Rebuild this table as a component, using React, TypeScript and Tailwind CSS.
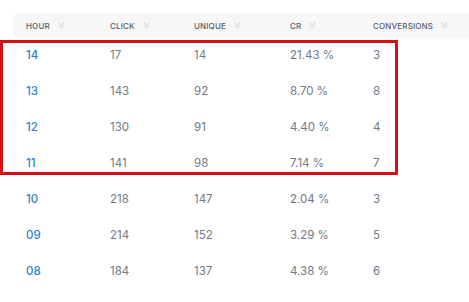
import React from "react";

const rows = [
  ["14", "17", "14", "21.43 %", "3"],
  ["13", "143", "92", "8.70 %", "8"],
  ["12", "130", "91", "4.40 %", "4"],
  ["11", "141", "98", "7.14 %", "7"],
  ["10", "218", "147", "2.04 %", "3"],
  ["09", "214", "152", "3.29 %", "5"],
  ["08", "184", "137", "4.38 %", "6"],
];

const headers = ["HOUR", "CLICK", "UNIQUE", "CR", "CONVERSIONS"];

function Chev() {
  return (
    <svg width="7" height="7" viewBox="0 0 7 7" fill="none" stroke="#c6cad1" strokeWidth="1" strokeLinecap="round" strokeLinejoin="round">
      <path d="M1 1 L3.5 3.2 L6 1" />
      <path d="M1 3.8 L3.5 6 L6 3.8" />
    </svg>
  );
}

export default function App() {
  return (
    <div className="relative w-[469px] h-[302px] bg-white overflow-hidden" style={{ fontFamily: "Inter, 'Noto Sans', sans-serif" }}>
      <div className="pt-[13px] pl-[13px]">
        <div className="grid grid-cols-[84px_84px_96px_83px_1fr] h-[25px] items-center bg-[#f7f7f8] rounded-l-[7px] pl-[13px]">
          {headers.map((h) => (
            <div key={h} className="flex items-center gap-[8px] text-[8px] font-medium text-[#545d6d] tracking-[0.15px]">
              <span>{h}</span>
              <Chev />
            </div>
          ))}
        </div>
        {rows.map((r) => (
          <div key={r[0]} className="grid grid-cols-[84px_84px_96px_83px_1fr] h-[36px] items-center pl-[13px] text-[11.5px]">
            <div className="text-[#2d7fd6] font-medium">{r[0]}</div>
            <div className="text-[#737884]">{r[1]}</div>
            <div className="text-[#737884]">{r[2]}</div>
            <div className="text-[#737884]">{r[3]}</div>
            <div className="text-[#737884]">{r[4]}</div>
          </div>
        ))}
      </div>
      <div className="absolute left-0 top-[40px] w-[398px] h-[135px] border-[3px] border-[#d50f14]" />
    </div>
  );
}
